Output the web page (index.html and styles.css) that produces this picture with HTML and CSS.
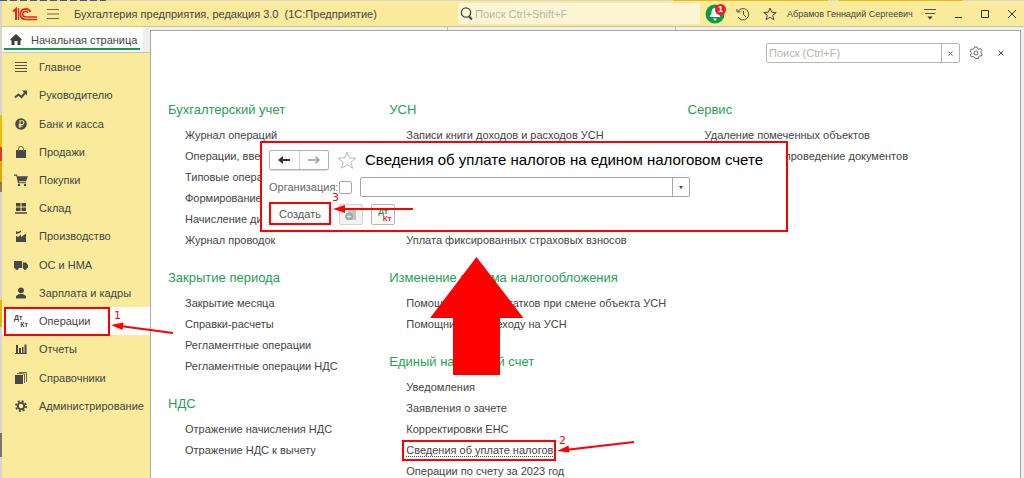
FILE: index.html
```html
<!DOCTYPE html>
<html lang="ru">
<head>
<meta charset="utf-8">
<title>Бухгалтерия предприятия</title>
<link rel="stylesheet" href="styles.css">
</head>
<body>
<div class="window">
  <header class="titlebar">
    <svg class="logo" width="26" height="14" viewBox="0 0 26 14" fill="none" stroke="#dc2a25">
      <path d="M1 4.500 4 2v11" stroke-width="2"/>
      <path d="M6.500 1v12" stroke-width="1.200"/>
      <path d="M18.500 5A5.300 5.300 0 1 0 13.500 12.500H25" stroke-width="1.700"/>
      <path d="M16 6A2.800 2.800 0 1 0 13.500 10H25" stroke-width="1.500"/>
    </svg>
    <button class="icon-btn burger" aria-label="Меню"><svg width="12" height="12" viewBox="0 0 12 12" stroke="#6f6a4a"><path d="M0 1.500h12M0 6h12M0 10.500h12"/></svg></button>
    <h1 class="app-title">Бухгалтерия предприятия, редакция 3.0 &nbsp;(1С:Предприятие)</h1>
    <label class="global-search">
      <svg width="13" height="13" viewBox="0 0 13 13" fill="none" stroke="#444"><circle cx="6" cy="5.500" r="4.700" stroke-width="1.200"/><path d="M9 9.500 12 12.500" stroke-width="2"/></svg>
      <input type="text" placeholder="Поиск Ctrl+Shift+F" aria-label="Поиск">
    </label>
    <button class="icon-btn bell" aria-label="Оповещения"><svg width="20" height="20" viewBox="0 0 20 20"><circle cx="10" cy="10" r="9.500" fill="#0a9a48"/><path d="M10 4c-3 0-3.500 3-3.500 5.500L4.500 13h11l-2-3.500C13.500 7 13 4 10 4zM8 14.500h4L10 17z" fill="#fff"/></svg><span class="badge">1</span></button>
    <button class="icon-btn history" aria-label="История"><svg width="14" height="14" viewBox="0 0 14 14" fill="none" stroke="#55513c"><path d="M2 4.500A5.700 5.700 0 1 1 2 10M1 2v3h3.500M7.500 4v3.500l2.500 2.500"/></svg></button>
    <button class="icon-btn favorite" aria-label="Избранное"><svg width="14" height="14" viewBox="0 0 14 14" fill="none" stroke="#444"><path d="m7 1 1.700 4.200 4.500.3-3.500 2.800 1.200 4.400L7 10.300l-3.900 2.400 1.200-4.400L.8 5.500l4.500-.3z"/></svg></button>
    <span class="user">Абрамов Геннадий Сергеевич</span>
    <button class="icon-btn service" aria-label="Сервис и настройки"><svg width="12" height="12" viewBox="0 0 12 12" stroke="#5b573d"><path d="M0 1.500h12M1 5.500h10"/><path d="M3.500 8.500h5L6 11.500z" fill="#333" stroke="none"/></svg></button>
    <div class="window-controls">
      <button class="icon-btn" aria-label="Свернуть"><svg width="8" height="10" viewBox="0 0 8 10" stroke="#333"><path d="M1 8.500h7"/></svg></button>
      <button class="icon-btn" aria-label="Развернуть"><svg width="8" height="10" viewBox="0 0 8 10" fill="none" stroke="#333"><path d="M.5 1.500h7v7h-7z"/></svg></button>
      <button class="icon-btn" aria-label="Закрыть"><svg width="8" height="10" viewBox="0 0 8 10" stroke="#333"><path d="m0 1 8 8M8 1 0 9"/></svg></button>
    </div>
  </header>

  <div class="workspace">
    <aside class="side">
      <a class="home-tab" href="#">
        <svg width="12" height="11" viewBox="0 0 12 11" fill="#3f3f3f"><path d="M6 0 12 5.500l-1 1-.5-.3V11H7.500V7h-3v4h-3V6.200L1 6.500l-1-1z"/></svg>
        <span>Начальная страница</span>
      </a>
      <nav class="sections">
        <a href="#"><svg viewBox="0 0 14 12" stroke="#57543f"><path d="M1 1.500h12M1 4.500h12M1 7.500h12M1 10.500h12"/></svg>Главное</a>
        <a href="#"><svg viewBox="0 0 14 12" fill="none" stroke="#484848" stroke-width="2"><path d="m1 8.500 3.500-3L7.500 8 11 4"/><path d="M8 1.500h5v5z" fill="#484848" stroke="none"/></svg>Руководителю</a>
        <a href="#"><svg viewBox="0 0 14 12"><circle cx="7" cy="6" r="5.800" fill="#484848"/><path d="M6 10V2.800h2a1.900 1.900 0 0 1 0 3.800H4.500M4.500 8.300h4" fill="none" stroke="#f9ea9c" stroke-width="1.100"/></svg>Банк и касса</a>
        <a href="#"><svg viewBox="0 0 14 12" fill="#484848"><path d="M2 4h10v8H2z"/><path d="M4.500 6V3a2.500 2.500 0 0 1 5 0v3" fill="none" stroke="#6b6750"/></svg>Продажи</a>
        <a href="#"><svg viewBox="0 0 14 12" fill="#484848"><path d="M0 .5h3l.6 1.700H14l-2 5H4.800l.2 1h7v1H4L2.300 1.700H0z"/><circle cx="5" cy="11" r="1.200"/><circle cx="11" cy="11" r="1.200"/></svg>Покупки</a>
        <a href="#"><svg viewBox="0 0 14 12" fill="#484848"><path d="M2 1h4.500v3.500H2zM7.500 1H12v3.500H7.500zM2 5.500h4.500V9H2zM7.500 5.500H12V9H7.500zM1 10.300h12v1.500H1z"/></svg>Склад</a>
        <a href="#"><svg viewBox="0 0 14 12" fill="#484848"><path d="M2 12V5.500L4 7l3-2.500V7l5-3.500V12zM2 4V1l2 1 3-1.500V2L4.500 3.500z"/></svg>Производство</a>
        <a href="#"><svg viewBox="0 0 14 12" fill="#484848"><path d="M0 2h8v7H0zM8.800 3.500H12l2 2.500v3H8.800z"/><circle cx="3" cy="9.300" r="1.600"/><circle cx="11" cy="9.300" r="1.600"/></svg>ОС и НМА</a>
        <a href="#"><svg viewBox="0 0 14 12" fill="#484848"><circle cx="7" cy="3.300" r="2.900"/><path d="M2 11.500V9l3-2h4l3 2v2.500z"/></svg>Зарплата и кадры</a>
        <a href="#" class="current"><span class="dtkt"><span>Дт</span><span>Кт</span></span>Операции</a>
        <a href="#"><svg viewBox="0 0 14 12" fill="#484848"><path d="M2 2h2v8H2zM5 5h2v5H5zM8 4h1.500v6H8zM10.500 1.500h2V10h-2zM1 10h12v1H1z"/></svg>Отчеты</a>
        <a href="#"><svg viewBox="0 0 14 12"><path d="M1 3h8v9H1z" fill="#484848"/><path d="M3 1.700h7.500V11M5 .5h7.500V10" fill="none" stroke="#6b6750"/></svg>Справочники</a>
        <a href="#"><svg viewBox="0 0 14 12" fill="none" stroke="#484848"><circle cx="7" cy="6" r="3.200" stroke-width="1.800"/><circle cx="7" cy="6" r="5" stroke-width="1.800" stroke-dasharray="2 1.930"/></svg>Администрирование</a>
      </nav>
    </aside>

    <main class="stage">
      <section class="panel">
        <div class="panel-tools">
          <div class="panel-search">
            <input type="text" placeholder="Поиск (Ctrl+F)" aria-label="Поиск по командам">
            <button aria-label="Очистить"><svg width="5" height="5" viewBox="0 0 5 5" stroke="#555"><path d="m.5.5 4 4M4.500.5l-4 4"/></svg></button>
          </div>
          <button class="icon-btn gear" aria-label="Настройка"><svg width="14" height="14" viewBox="0 0 14 14" fill="none" stroke="#666"><path d="M5.800 1h2.400l.4 1.700 1.200.6 1.600-.8 1.500 1.900-1 1.300.2 1.300 1.200 1-.9 2-1.600-.1-1.100.9-.3 1.700H6.200l-.9-1.600-1.200-.4-1.600.5-1.200-2 1-1.300-.1-1.300L.9 5l1.200-2 1.700.4 1.200-.7z"/><circle cx="7" cy="7" r="2"/></svg></button>
          <button class="icon-btn panel-close" aria-label="Закрыть панель"><svg width="6" height="6" viewBox="0 0 6 6" stroke="#555"><path d="m.5.5 5 5M5.500.5l-5 5"/></svg></button>
        </div>

        <div class="columns">
          <div class="column">
            <section class="group">
              <h2>Бухгалтерский учет</h2>
              <ul>
                <li><a href="#">Журнал операций</a></li>
                <li><a href="#">Операции, введенные вручную</a></li>
                <li><a href="#">Типовые операции</a></li>
                <li><a href="#">Формирование записей</a></li>
                <li><a href="#">Начисление дивидендов</a></li>
                <li><a href="#">Журнал проводок</a></li>
              </ul>
            </section>
            <section class="group">
              <h2>Закрытие периода</h2>
              <ul>
                <li><a href="#">Закрытие месяца</a></li>
                <li><a href="#">Справки-расчеты</a></li>
                <li><a href="#">Регламентные операции</a></li>
                <li><a href="#">Регламентные операции НДС</a></li>
              </ul>
            </section>
            <section class="group">
              <h2>НДС</h2>
              <ul>
                <li><a href="#">Отражение начисления НДС</a></li>
                <li><a href="#">Отражение НДС к вычету</a></li>
              </ul>
            </section>
          </div>
          <div class="column">
            <section class="group">
              <h2>УСН</h2>
              <ul>
                <li><a href="#">Записи книги доходов и расходов УСН</a></li>
                <li class="sixth"><a href="#">Уплата фиксированных страховых взносов</a></li>
              </ul>
            </section>
            <section class="group">
              <h2>Изменение режима налогообложения</h2>
              <ul>
                <li><a href="#">Помощник ввода остатков при смене объекта УСН</a></li>
                <li><a href="#">Помощник по переходу на УСН</a></li>
              </ul>
            </section>
            <section class="group">
              <h2>Единый налоговый счет</h2>
              <ul>
                <li><a href="#">Уведомления</a></li>
                <li><a href="#">Заявления о зачете</a></li>
                <li><a href="#">Корректировки ЕНС</a></li>
                <li><a href="#" class="focused">Сведения об уплате налогов</a></li>
                <li><a href="#">Операции по счету за 2023 год</a></li>
              </ul>
            </section>
          </div>
          <div class="column">
            <section class="group">
              <h2>Сервис</h2>
              <ul>
                <li><a href="#">Удаление помеченных объектов</a></li>
                <li><a href="#">Групповое перепроведение документов</a></li>
              </ul>
            </section>
          </div>
        </div>
      </section>
    </main>
  </div>

  <section class="form-window">
    <div class="form-head">
      <div class="nav-buttons">
        <button aria-label="Назад"><svg width="12" height="8" viewBox="0 0 12 8" stroke="#333" fill="#333"><path d="M3 4h9" stroke-width="2"/><path d="M0 4 5 0v8z" stroke="none"/></svg></button>
        <button aria-label="Вперед"><svg width="12" height="8" viewBox="0 0 12 8" stroke="#999" fill="none"><path d="M0 4h11" stroke-width="1.500"/><path d="m7.500.7 3.500 3.300-3.500 3.300" stroke-width="1.500"/></svg></button>
      </div>
      <svg class="form-star" width="20" height="18" viewBox="0 0 20 18" fill="none" stroke="#b4b8bd"><path d="m10 1 2.300 5.800 6.700.4-5.200 4 1.800 6L10 13.800 4.400 17.200l1.800-6L1 7.200l6.700-.4z"/></svg>
      <h2>Сведения об уплате налогов на едином налоговом счете</h2>
    </div>
    <div class="form-filter">
      <label for="org-on">Организация:</label>
      <input id="org-on" type="checkbox">
      <div class="combo">
        <input type="text" aria-label="Организация">
        <button aria-label="Выбрать"><svg width="4" height="3" viewBox="0 0 4 3"><path d="M0 0h4L2 3z" fill="#444"/></svg></button>
      </div>
    </div>
    <div class="form-commands">
      <button class="create">Создать</button>
      <button class="square" disabled aria-label="Создать копированием"><svg width="14" height="14" viewBox="0 0 14 14"><path d="M4 2h5v-1h3v11H4z" fill="#bfc3c4"/><circle cx="5" cy="8.500" r="3.800" fill="#94ad9c"/><path d="M5 6.500v4M3 8.500h4" stroke="#e8efe9"/></svg></button>
      <button class="square dtkt-color" aria-label="Показать проводки"><span class="dtkt"><span>Дт</span><span>Кт</span></span></button>
    </div>
  </section>

  <div class="marker marker-section"></div>
  <div class="marker marker-command"></div>
  <svg class="arrows" width="1024" height="478" viewBox="0 0 1024 478" fill="#f00" stroke="#f00" stroke-width="2">
    <path d="M173 333 120 326"/><path d="m111 325 12.500-2.500-1 7.500z" stroke="none"/>
    <path d="m634 442-69 8"/><path d="m557 451 11.500-5.500 1 7z" stroke="none"/>
    <path d="M413 209h-72"/><path d="m333 209 12-4v8z" stroke="none"/>
    <path d="m476.500 257 47 61H500v57h-47v-57h-23z" stroke="none"/>
  </svg>
  <span class="step step-1">1</span>
  <span class="step step-2">2</span>
  <span class="step step-3">3</span>
</div>
</body>
</html>
```
FILE: styles.css
```css
* { box-sizing: border-box; }
html, body { height: 100%; }
body {
  margin: 0;
  overflow: hidden;
  font: 11px/16px "Liberation Sans", Arial, sans-serif;
  color: #444;
}
a { color: inherit; text-decoration: none; }
button, input { font: inherit; color: inherit; margin: 0; padding: 0; }
h1, h2, ul { margin: 0; padding: 0; font-weight: normal; }
ul { list-style: none; }
svg { display: block; flex: none; }

.window {
  position: relative;
  display: flex;
  flex-direction: column;
  min-height: 100%;
  padding: 1px 0 0 2px;
  background:
    linear-gradient(90deg, transparent 673px, #e9bb22 673px 828px, transparent 828px 839px, #e9bb22 839px 963px, transparent 963px) 0 0 / 100% 1px no-repeat,
    repeating-linear-gradient(90deg, #4a5480 0 7px, #d8d6cc 7px 10px) 0 0 / 106px 1px no-repeat,
    linear-gradient(transparent 115px, #f0c000 115px 147px, #e03a20 147px 161px, #e0a800 161px 182px, #8c7c50 182px 192px, transparent 192px 300px, #f0b400 300px 327px, transparent 327px 433px, #77756f 433px 457px, transparent 457px) 0 0 / 2px 100% no-repeat,
    #d9d7cd;
}

.titlebar {
  display: flex;
  align-items: center;
  height: 26px;
  padding: 0 8px 0 10px;
  background: #f9ea9c;
  border-bottom: 1px solid #cfc48c;
}
.icon-btn {
  position: relative;
  display: flex;
  padding: 0;
  border: 0;
  background: none;
}
.burger { margin-left: 9px; }
.app-title { margin-left: 15px; font-size: 11px; line-height: 16px; white-space: nowrap; }
.global-search {
  display: flex;
  align-items: center;
  gap: 2px;
  width: 242px;
  height: 21px;
  margin-left: auto;
  padding-left: 2px;
  border-radius: 2px;
  background: #fdf5d4;
}
.global-search input { flex: 1; min-width: 0; border: 0; background: none; font-size: 11px; }
input::placeholder { color: #b9b5ac; opacity: 1; }
.bell { margin-left: 5px; }
.badge {
  position: absolute;
  top: 0;
  right: -1px;
  width: 11px;
  height: 11px;
  border-radius: 50%;
  background: #f0202a;
  color: #fff;
  font-size: 9px;
  font-weight: bold;
  line-height: 11px;
  text-align: center;
}
.history { margin-left: 11px; }
.favorite { margin-left: 13px; }
.user { width: 126px; margin-left: 10px; font-size: 9px; white-space: nowrap; }
.service { margin-left: 11px; }
.window-controls { display: flex; gap: 19px; margin-left: 18px; }

.workspace { display: flex; flex: 1; }
.side { display: flex; flex-direction: column; width: 148px; background: #f9ea9c; }
.home-tab {
  display: flex;
  align-items: center;
  gap: 9px;
  height: 25px;
  padding-left: 8px;
  border-right: 7px solid #efefef;
  background: linear-gradient(#0f9a50, #0f9a50) 2px 21px / 136px 2px no-repeat, #fff;
  box-shadow: 0 1px #c8c4ae;
  white-space: nowrap;
}
.sections { display: grid; grid-template-rows: repeat(13, 1fr); height: 367px; margin-top: 1px; }
.sections a { display: flex; align-items: center; gap: 11px; padding-left: 12px; white-space: nowrap; }
.sections svg { width: 14px; height: 12px; }
.sections .current { background: #fff; }
.dtkt { display: flex; flex-direction: column; width: 14px; font-size: 7px; font-weight: bold; line-height: 7px; }
.dtkt span:last-child { align-self: flex-end; }

.stage {
  flex: 1;
  display: flex;
  min-width: 0;
  padding: 3px 3px 0 0;
  background: linear-gradient(90deg, transparent 297px, #bbb 297px 298px, transparent 298px 525px, #bbb 525px 526px, transparent 526px) 0 0 / 100% 3px no-repeat, #efefef;
}
.panel { flex: 1; min-width: 0; border: 1px solid #a8a8a8; border-bottom: 0; background: #fff; }
.panel-tools { display: flex; align-items: center; justify-content: flex-end; height: 44px; padding-right: 16px; }
.panel-search { display: flex; width: 194px; height: 20px; border: 1px solid #b5b5b5; border-radius: 2px; }
.panel-search input { flex: 1; min-width: 0; padding-left: 2px; border: 0; background: none; }
.panel-search button { display: grid; place-items: center; width: 18px; border: 0; border-left: 1px solid #b5b5b5; background: none; }
.gear { margin-left: 9px; }
.panel-close { margin-left: 15px; }

.columns { display: grid; grid-template-columns: 221fr 298fr 332fr; height: 404px; padding: 21px 0 0 17px; }
.column { display: flex; flex-direction: column; gap: 13px; min-width: 0; }
.group h2 { padding-bottom: 1px; color: #1fa055; font-size: 13px; line-height: 28px; white-space: nowrap; }
.group ul { display: grid; grid-auto-rows: 21px; padding-left: 17px; }
.group li { line-height: 21px; white-space: nowrap; }
.sixth { grid-row: 6; }
.focused { border-bottom: 1px dotted #444; }

.form-window {
  position: absolute;
  left: 260px;
  top: 141px;
  display: flex;
  flex-direction: column;
  gap: 7px;
  width: 528px;
  height: 91px;
  padding: 6px 7px;
  border: 2px solid #f00;
  background: #fff;
}
.form-head, .form-filter, .form-commands { display: flex; align-items: center; }
.nav-buttons { display: flex; flex: none; width: 60px; height: 20px; border: 1px solid #b0b0b0; border-radius: 2px; box-shadow: 0 1px #ddd; }
.nav-buttons button { display: grid; flex: 1; place-items: center; border: 0; background: none; }
.nav-buttons button + button { border-left: 1px solid #ccc; }
.form-star { margin-left: 8px; }
.form-head h2 { margin-left: 8px; color: #000; font-size: 15px; line-height: 21px; white-space: nowrap; }
.form-filter label { width: 70px; color: #666; white-space: nowrap; }
.form-filter input[type="checkbox"] { appearance: none; width: 13px; height: 13px; border: 1px solid #a5a5a5; border-radius: 2px; background: #fff; }
.combo { display: flex; width: 330px; height: 20px; margin-left: 8px; border: 1px solid #a5a5a5; border-radius: 2px; }
.combo input { flex: 1; min-width: 0; border: 0; background: none; }
.combo button { display: grid; place-items: center; width: 17px; border: 0; border-left: 1px solid #a5a5a5; background: none; }
.create { width: 62px; height: 23px; border: 2px solid #f00; background: #fff; color: #555; }
.form-commands { gap: 8px; align-items: flex-end; margin-top: -2px; }
.square { display: grid; place-items: center; width: 24px; height: 21px; border: 1px solid #b5b5b5; border-radius: 2px; background: #fafafa; }
.square:disabled { border-color: #d2d2d2; background: #f2f2f2; }
.dtkt-color .dtkt { width: 17px; font-size: 8px; color: #149a4d; }
.dtkt-color .dtkt span:last-child { color: #d8302f; }

.marker { position: absolute; border: 2px solid #f00; pointer-events: none; }
.marker-section { left: 4px; top: 307px; width: 106px; height: 29px; }
.marker-command { left: 402px; top: 440px; width: 154px; height: 21px; }
.arrows { position: absolute; left: 0; top: 0; pointer-events: none; }
.step { position: absolute; color: #f00; font: 11px/14px "DejaVu Sans", sans-serif; }
.step-1 { left: 114px; top: 309px; }
.step-2 { left: 559px; top: 434px; }
.step-3 { left: 332px; top: 191px; }
```
